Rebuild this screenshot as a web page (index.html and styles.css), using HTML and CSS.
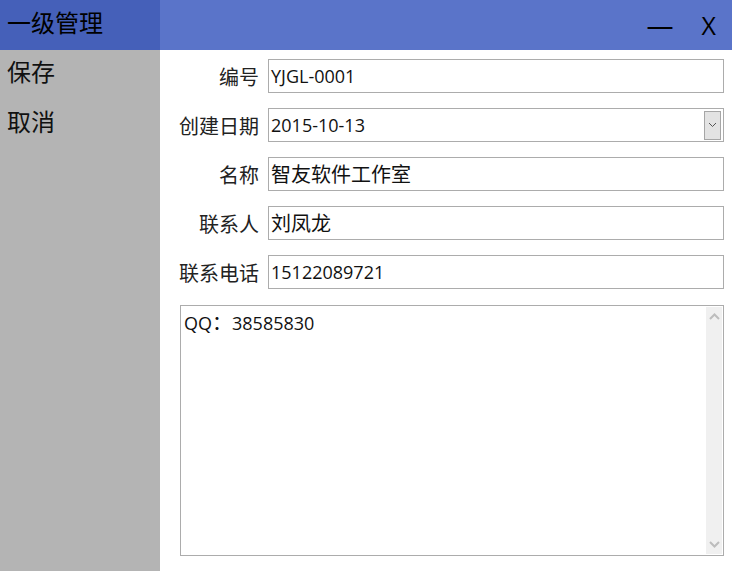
FILE: index.html
```html
<!DOCTYPE html>
<html lang="zh-CN">
<head>
    <meta charset="UTF-8">
    <title>一级管理</title>
    <link rel="stylesheet" href="styles.css">
</head>
<body>
    <div class="window">
        <!-- Title bar -->
        <div class="titlebar">
            <div class="title">一级管理</div>
            <div class="controls">
                <span class="ctl min">—</span>
                <span class="ctl close">X</span>
            </div>
        </div>

        <div class="main">
            <!-- Left menu -->
            <div class="sidebar">
                <div class="menu-item">保存</div>
                <div class="menu-item">取消</div>
            </div>

            <!-- Form -->
            <div class="form">
                <div class="row">
                    <label class="label">编号</label>
                    <div class="field">YJGL-0001</div>
                </div>
                <div class="row">
                    <label class="label">创建日期</label>
                    <div class="field combo">
                        <span class="value">2015-10-13</span>
                        <span class="drop">
                            <svg width="9" height="6" viewBox="0 0 9 6"><path d="M1,1 L4.5,4.5 L8,1" fill="none" stroke="#555" stroke-width="1"/></svg>
                        </span>
                    </div>
                </div>
                <div class="row">
                    <label class="label">名称</label>
                    <div class="field cjk">智友软件工作室</div>
                </div>
                <div class="row">
                    <label class="label">联系人</label>
                    <div class="field cjk">刘凤龙</div>
                </div>
                <div class="row">
                    <label class="label">联系电话</label>
                    <div class="field">15122089721</div>
                </div>

                <div class="memo">
                    <div class="memo-text">QQ<span class="cjk">：</span>38585830</div>
                    <div class="scrollbar">
                        <svg width="11" height="7" viewBox="0 0 11 7"><path d="M1,6 L5.5,1.5 L10,6" fill="none" stroke="#bdbdbd" stroke-width="2"/></svg>
                        <svg width="11" height="7" viewBox="0 0 11 7"><path d="M1,1 L5.5,5.5 L10,1" fill="none" stroke="#bdbdbd" stroke-width="2"/></svg>
                    </div>
                </div>
            </div>
        </div>
    </div>
</body>
</html>
```

FILE: styles.css
```css
body {
    margin: 0;
    font-family: "Open Sans", "Noto Sans CJK SC", sans-serif;
    background-color: #ffffff;
}
.window {
    width: 732px;
    height: 571px;
    display: flex;
    flex-direction: column;
}
.titlebar {
    height: 50px;
    display: flex;
    background-color: #5a74c9;
}
.title {
    width: 160px;
    box-sizing: border-box;
    padding-left: 7px;
    background-color: #4560b9;
    color: #000;
    font-size: 24px;
    line-height: 46px;
}
.controls {
    flex: 1;
    display: flex;
    justify-content: flex-end;
    align-items: center;
    padding-right: 16px;
    gap: 28px;
    color: #000;
}
.ctl {
    font-size: 25px;
    line-height: 46px;
}
.min {
    font-size: 27px;
}
.main {
    flex: 1;
    display: flex;
}
.sidebar {
    width: 160px;
    background-color: #b4b4b4;
    padding-top: 2px;
}
.menu-item {
    padding-left: 7px;
    font-size: 24px;
    line-height: 40px;
    height: 50px;
    color: #111;
}
.form {
    flex: 1;
    display: flex;
    flex-direction: column;
    padding: 9px 8px 15px 0;
    gap: 15px;
}
.row {
    display: flex;
    align-items: center;
    height: 34px;
}
.label {
    width: 99px;
    text-align: right;
    padding-right: 9px;
    font-size: 20px;
    color: #222;
}
.field {
    flex: 1;
    height: 34px;
    box-sizing: border-box;
    border: 1px solid #acacac;
    padding-left: 2px;
    font-size: 18px;
    line-height: 31px;
    color: #111;
    display: flex;
    align-items: center;
}
.cjk {
    font-size: 20px;
}
.combo {
    justify-content: space-between;
    padding-right: 2px;
}
.drop {
    width: 15px;
    height: 27px;
    border: 1px solid #a6a6a6;
    background-color: #e3e3e3;
    display: flex;
    align-items: center;
    justify-content: center;
}
.memo {
    flex: 1;
    margin-left: 20px;
    margin-top: 1px;
    border: 1px solid #acacac;
    display: flex;
    padding: 1px;
}
.memo-text {
    flex: 1;
    padding: 4px 0 0 2px;
    font-size: 18px;
    line-height: 24px;
    color: #111;
}
.scrollbar {
    width: 16px;
    background-color: #f0f0f0;
    display: flex;
    flex-direction: column;
    justify-content: space-between;
    align-items: center;
    padding: 6px 0;
}
```
